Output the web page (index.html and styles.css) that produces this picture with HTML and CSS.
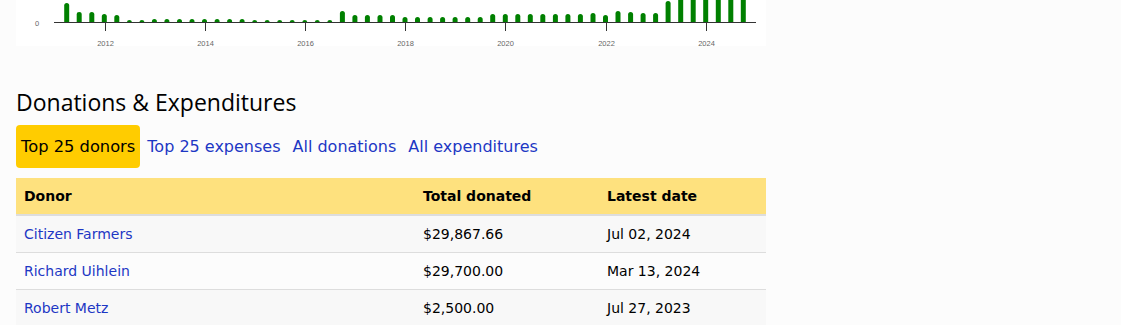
FILE: index.html
```html
<!DOCTYPE html>
<html>
<head>
<meta charset="utf-8">
<link rel="stylesheet" href="styles.css">
</head>
<body>
<div class="page">
  <div class="chart">
    <svg width="750" height="46" viewBox="0 0 750 46">
      <defs><clipPath id="above"><rect x="0" y="-50" width="750" height="72"/></clipPath></defs>
      <g class="bars" clip-path="url(#above)">
        <rect x="48.2" y="3" width="5" height="22" rx="2.5"/>
        <rect x="60.7" y="12" width="5" height="13" rx="2.5"/>
        <rect x="73.3" y="12" width="5" height="13" rx="2.5"/>
        <rect x="85.8" y="14" width="5" height="11" rx="2.5"/>
        <rect x="98.3" y="15" width="5" height="10" rx="2.5"/>
        <rect x="110.9" y="20" width="5" height="5" rx="2.5"/>
        <rect x="123.4" y="20" width="5" height="5" rx="2.5"/>
        <rect x="135.9" y="19" width="5" height="6" rx="2.5"/>
        <rect x="148.4" y="19" width="5" height="6" rx="2.5"/>
        <rect x="161.0" y="19" width="5" height="6" rx="2.5"/>
        <rect x="173.5" y="19" width="5" height="6" rx="2.5"/>
        <rect x="186.0" y="19" width="5" height="6" rx="2.5"/>
        <rect x="198.6" y="19" width="5" height="6" rx="2.5"/>
        <rect x="211.1" y="19" width="5" height="6" rx="2.5"/>
        <rect x="223.6" y="19" width="5" height="6" rx="2.5"/>
        <rect x="236.2" y="20" width="5" height="5" rx="2.5"/>
        <rect x="248.7" y="20" width="5" height="5" rx="2.5"/>
        <rect x="261.2" y="20" width="5" height="5" rx="2.5"/>
        <rect x="273.7" y="20" width="5" height="5" rx="2.5"/>
        <rect x="286.3" y="20" width="5" height="5" rx="2.5"/>
        <rect x="298.8" y="20" width="5" height="5" rx="2.5"/>
        <rect x="311.3" y="20" width="5" height="5" rx="2.5"/>
        <rect x="323.9" y="11" width="5" height="14" rx="2.5"/>
        <rect x="336.4" y="15" width="5" height="10" rx="2.5"/>
        <rect x="348.9" y="15" width="5" height="10" rx="2.5"/>
        <rect x="361.5" y="15" width="5" height="10" rx="2.5"/>
        <rect x="374.0" y="15" width="5" height="10" rx="2.5"/>
        <rect x="386.5" y="17" width="5" height="8" rx="2.5"/>
        <rect x="399.0" y="17" width="5" height="8" rx="2.5"/>
        <rect x="411.6" y="17" width="5" height="8" rx="2.5"/>
        <rect x="424.1" y="17" width="5" height="8" rx="2.5"/>
        <rect x="436.6" y="17" width="5" height="8" rx="2.5"/>
        <rect x="449.2" y="17" width="5" height="8" rx="2.5"/>
        <rect x="461.7" y="17" width="5" height="8" rx="2.5"/>
        <rect x="474.2" y="14" width="5" height="11" rx="2.5"/>
        <rect x="486.8" y="14" width="5" height="11" rx="2.5"/>
        <rect x="499.3" y="14" width="5" height="11" rx="2.5"/>
        <rect x="511.8" y="14" width="5" height="11" rx="2.5"/>
        <rect x="524.3" y="14" width="5" height="11" rx="2.5"/>
        <rect x="536.9" y="14" width="5" height="11" rx="2.5"/>
        <rect x="549.4" y="14" width="5" height="11" rx="2.5"/>
        <rect x="561.9" y="14" width="5" height="11" rx="2.5"/>
        <rect x="574.5" y="13" width="5" height="12" rx="2.5"/>
        <rect x="587.0" y="15" width="5" height="10" rx="2.5"/>
        <rect x="599.5" y="11" width="5" height="14" rx="2.5"/>
        <rect x="612.1" y="12" width="5" height="13" rx="2.5"/>
        <rect x="624.6" y="13" width="5" height="12" rx="2.5"/>
        <rect x="637.1" y="13" width="5" height="12" rx="2.5"/>
        <rect x="649.6" y="1" width="5" height="24" rx="2.5"/>
        <rect x="662.2" y="-10" width="5" height="35" rx="2.5"/>
        <rect x="674.7" y="-10" width="5" height="35" rx="2.5"/>
        <rect x="687.2" y="-10" width="5" height="35" rx="2.5"/>
        <rect x="699.8" y="-10" width="5" height="35" rx="2.5"/>
        <rect x="712.3" y="-10" width="5" height="35" rx="2.5"/>
        <rect x="724.8" y="-10" width="5" height="35" rx="2.5"/>
      </g>
      <line class="axis" x1="38" y1="22.5" x2="740" y2="22.5"/>
      <g class="ticks">
        <line x1="89.5" y1="22" x2="89.5" y2="31"/>
        <line x1="189.5" y1="22" x2="189.5" y2="31"/>
        <line x1="289.5" y1="22" x2="289.5" y2="31"/>
        <line x1="389.5" y1="22" x2="389.5" y2="31"/>
        <line x1="489.5" y1="22" x2="489.5" y2="31"/>
        <line x1="590.5" y1="22" x2="590.5" y2="31"/>
        <line x1="690.5" y1="22" x2="690.5" y2="31"/>
      </g>
      <g class="labels">
        <text x="21" y="25.5">0</text>
        <text x="89.5" y="45.5">2012</text>
        <text x="189.5" y="45.5">2014</text>
        <text x="289.5" y="45.5">2016</text>
        <text x="389.5" y="45.5">2018</text>
        <text x="489.5" y="45.5">2020</text>
        <text x="590.5" y="45.5">2022</text>
        <text x="690.5" y="45.5">2024</text>
      </g>
    </svg>
  </div>

  <h2 class="title">Donations &amp; Expenditures</h2>

  <nav class="tabs">
    <a class="tab active">Top 25 donors</a>
    <a class="tab" href="#">Top 25 expenses</a>
    <a class="tab" href="#">All donations</a>
    <a class="tab" href="#">All expenditures</a>
  </nav>

  <table class="data">
    <colgroup><col class="c1"><col class="c2"><col class="c3"></colgroup>
    <thead>
      <tr><th>Donor</th><th>Total donated</th><th>Latest date</th></tr>
    </thead>
    <tbody>
      <tr><td><a href="#">Citizen Farmers</a></td><td>$29,867.66</td><td>Jul 02, 2024</td></tr>
      <tr><td><a href="#">Richard Uihlein</a></td><td>$29,700.00</td><td>Mar 13, 2024</td></tr>
      <tr><td><a href="#">Robert Metz</a></td><td>$2,500.00</td><td>Jul 27, 2023</td></tr>
    </tbody>
  </table>
</div>
</body>
</html>
```

FILE: styles.css
```css
html, body {
  margin: 0;
  padding: 0;
  background: #fcfcfc;
}
body {
  font-family: "DejaVu Sans", Verdana, sans-serif;
  color: #000;
}
.page {
  padding-left: 16px;
  width: 750px;
}
.chart {
  background: #fff;
  height: 46px;
  overflow: hidden;
}
.chart svg {
  display: block;
}
.bars rect {
  fill: #008000;
}
.axis, .ticks line {
  stroke: #333;
  stroke-width: 1;
}
.labels text {
  font-family: "Liberation Sans", Arial, sans-serif;
  font-size: 7.5px;
  fill: #666;
  text-anchor: middle;
}
.title {
  font-family: "Open Sans", "Noto Sans", sans-serif;
  font-weight: 400;
  font-size: 23px;
  line-height: 33px;
  margin: 40px 0 6px;
}
.tabs {
  display: flex;
  gap: 2px;
  margin-bottom: 10px;
}
.tab {
  font-size: 16px;
  line-height: 19px;
  padding: 12px 5px;
  color: #1d37c4;
  text-decoration: none;
  border-radius: 4px;
}
.tab.active {
  font-size: 16.3px;
  background: #ffcc00;
  color: #000;
}
.data {
  width: 750px;
  border-collapse: collapse;
  font-size: 14px;
  table-layout: fixed;
}
.c1 { width: 399px; }
.c2 { width: 184px; }
.c3 { width: 167px; }
.data th {
  background: #fee17e;
  text-align: left;
  font-weight: bold;
  padding: 8px;
  line-height: 20px;
  border-bottom: 2px solid #ddd;
}
.data td {
  padding: 8px;
  line-height: 20px;
  border-bottom: 1px solid #ddd;
}
.data tbody tr:nth-child(odd) td {
  background: #f8f8f8;
}
.data tbody tr:nth-child(even) td {
  background: #fcfcfc;
}
.data a {
  color: #1d37c4;
  text-decoration: none;
}
```
